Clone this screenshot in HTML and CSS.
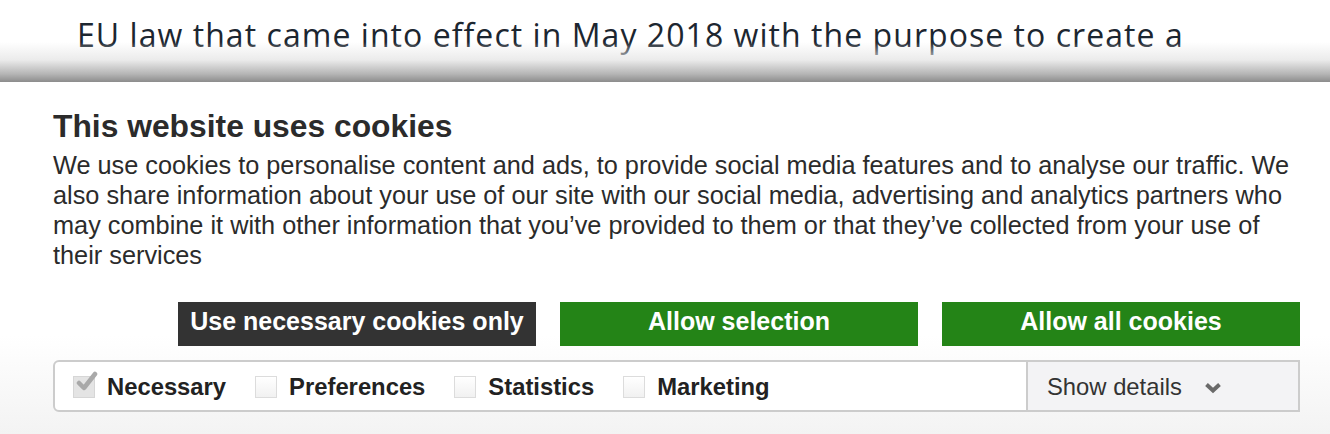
FILE: index.html
```html
<!DOCTYPE html>
<html lang="en">
<head>
<meta charset="utf-8">
<title>Cookies</title>
<link rel="stylesheet" href="styles.css">
</head>
<body>
<div class="page">
  <p class="article">EU law that came into effect in May 2018 with the purpose to create a</p>
  <div class="shade"></div>
</div>
<section class="banner">
  <h2 class="title">This website uses cookies</h2>
  <p class="intro">We use cookies to personalise content and ads, to provide social media features and to analyse our traffic. We also share information about your use of our site with our social media, advertising and analytics partners who may combine it with other information that you’ve provided to them or that they’ve collected from your use of their services</p>
  <div class="actions">
    <button class="btn btn-dark">Use necessary cookies only</button>
    <button class="btn btn-green">Allow selection</button>
    <button class="btn btn-green">Allow all cookies</button>
  </div>
  <div class="bar">
    <div class="options">
      <label class="opt">
        <span class="box box-checked">
          <svg viewBox="0 0 24 24" width="24" height="24"><path d="M4 12 L9 17 L20 3" fill="none" stroke="#a9a9a9" stroke-width="4.5" stroke-linecap="round" stroke-linejoin="round"/></svg>
        </span>
        <span class="opt-label">Necessary</span>
      </label>
      <label class="opt"><span class="box"></span><span class="opt-label">Preferences</span></label>
      <label class="opt"><span class="box"></span><span class="opt-label">Statistics</span></label>
      <label class="opt"><span class="box"></span><span class="opt-label">Marketing</span></label>
    </div>
    <div class="details">
      <span>Show details</span>
      <svg class="chev" viewBox="0 0 18 12" width="18" height="12"><path d="M2.5 2.5 L9 8.5 L15.5 2.5" fill="none" stroke="#6a6a6a" stroke-width="4" stroke-linejoin="miter"/></svg>
    </div>
  </div>
</section>
</body>
</html>
```

FILE: styles.css
```css
* { box-sizing: border-box; }
html, body { margin: 0; padding: 0; }
body {
  width: 1330px;
  height: 434px;
  overflow: hidden;
  background: #ffffff;
  font-family: "Liberation Sans", Arial, sans-serif;
}
.page {
  position: relative;
  height: 82px;
  overflow: hidden;
  background: #ffffff;
}
.article {
  margin: 0;
  padding: 15px 0 0 77px;
  font-family: "Open Sans", Lato, sans-serif;
  font-size: 32px;
  line-height: 40px;
  color: #1c2630;
  letter-spacing: 1.05px;
  white-space: nowrap;
}
.shade {
  position: absolute;
  left: 0;
  right: 0;
  bottom: 0;
  height: 40px;
  background: linear-gradient(to bottom, rgba(255,255,255,0) 0%, rgba(230,230,230,0.8) 45%, #b5b5b5 80%, #8c8c8c 100%);
}
.banner {
  height: 352px;
  padding: 24px 30px 0 53px;
  background: linear-gradient(to bottom, #ffffff 0%, #ffffff 72%, #f3f3f3 100%);
  color: #333333;
}
.title {
  margin: 0;
  font-size: 31.8px;
  line-height: 40px;
  font-weight: bold;
  color: #2b2b2b;
}
.intro {
  margin: 4px 0 0 0;
  font-size: 25.3px;
  line-height: 30px;
  color: #2b2b2b;
}
.actions {
  display: flex;
  justify-content: flex-end;
  gap: 24px;
  margin-top: 32px;
}
.btn {
  width: 358px;
  height: 44px;
  border: 0;
  padding: 0 0 6px 0;
  font-family: "Liberation Sans", Arial, sans-serif;
  font-size: 25px;
  font-weight: bold;
  color: #ffffff;
  line-height: 30px;
}
.btn-dark { background: #333333; }
.btn-green { background: #248417; }
.bar {
  display: flex;
  margin-top: 14px;
  height: 52px;
  border: 2px solid #cccccc;
  border-radius: 6px 0 0 6px;
  background: #ffffff;
}
.options {
  flex: 1;
  display: flex;
  align-items: center;
  padding: 2px 0 0 18px;
  gap: 29px;
}
.opt {
  display: flex;
  align-items: center;
  gap: 12px;
}
.box {
  position: relative;
  width: 22px;
  height: 22px;
  border: 1px solid #dcdcdc;
  background: linear-gradient(to bottom, #ffffff, #f1f1f1);
}
.box-checked {
  background: #e4e4e4;
  border-color: #d6d6d6;
}
.box-checked svg {
  position: absolute;
  left: 1px;
  top: -6px;
}
.opt-label {
  font-size: 23.8px;
  font-weight: bold;
  color: #222222;
  line-height: 28px;
}
.details {
  width: 272px;
  display: flex;
  align-items: center;
  padding: 2px 0 0 19px;
  gap: 22px;
  background: #f3f3f5;
  border-left: 2px solid #cccccc;
  font-size: 23.8px;
  color: #333333;
}
.chev { margin-top: 1px; }
```
